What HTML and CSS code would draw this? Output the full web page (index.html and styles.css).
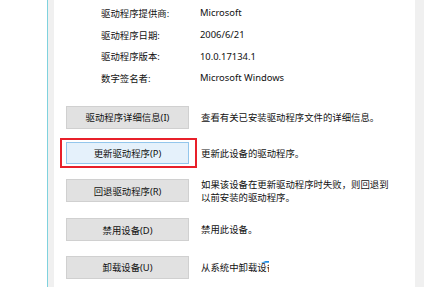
FILE: index.html
```html
<!DOCTYPE html>
<html lang="zh-CN">
<head>
  <meta charset="UTF-8">
  <title>驱动程序</title>
  <link rel="stylesheet" href="styles.css">
</head>
<body>
  <div class="window">
    <div class="panel">
      <!-- driver info -->
      <div class="info">
        <div class="info-row"><span class="label">驱动程序提供商:</span><span>Microsoft</span></div>
        <div class="info-row"><span class="label">驱动程序日期:</span><span>2006/6/21</span></div>
        <div class="info-row"><span class="label">驱动程序版本:</span><span>10.0.17134.1</span></div>
        <div class="info-row"><span class="label">数字签名者:</span><span>Microsoft Windows</span></div>
      </div>

      <!-- actions -->
      <div class="actions">
        <div class="action">
          <button class="btn">驱动程序详细信息(I)</button>
          <div class="desc">查看有关已安装驱动程序文件的详细信息。</div>
        </div>
        <div class="action">
          <button class="btn focused">更新驱动程序(P)</button>
          <div class="desc">更新此设备的驱动程序。</div>
        </div>
        <div class="action tall">
          <button class="btn">回退驱动程序(R)</button>
          <div class="desc">如果该设备在更新驱动程序时失败，则回退到<br>以前安装的驱动程序。</div>
        </div>
        <div class="action tall">
          <button class="btn">禁用设备(D)</button>
          <div class="desc">禁用此设备。</div>
        </div>
        <div class="action">
          <button class="btn">卸载设备(U)</button>
          <div class="desc cut">从系统中卸载设备<span class="mark"></span></div>
        </div>
      </div>
    </div>
  </div>
</body>
</html>
```

FILE: styles.css
```css
body { margin: 0; background: #fff; font-family: "Noto Sans", "Noto Sans CJK SC", sans-serif; font-size: 9.4px; color: #111; }
.window { margin-left: 47px; width: 361px; height: 287px; display: flex; background: #f0f0f0; border-left: 1px solid #7fd2de; border-right: 1px solid #7fd2de; padding: 0 9px 0 6px; box-sizing: content-box; }
.panel { flex: 1; background: #fff; }

.info { padding: 2px 0 0 47px; }
.info-row { display: flex; height: 21.7px; align-items: center; }
.label { width: 99px; }

.actions { display: flex; flex-direction: column; gap: 13px; padding: 17px 0 0 12px; }
.action { display: flex; align-items: center; min-height: 23px; }
.action.tall { min-height: 26px; }
.btn { width: 123px; height: 23px; flex: none; margin-right: 12px; background: #e1e1e1; border: 1px solid #d0d0d0; font: inherit; color: inherit; padding: 0; position: relative; }
.btn.focused { background: #e5f1fb; border-color: #93c6ec; height: 22px; }
.btn.focused::after { content: ""; position: absolute; left: -7px; top: -5px; width: 133px; height: 26px; border: 2px solid #e8202a; }
.desc { line-height: 13px; }
.desc.cut { width: 68px; overflow: hidden; white-space: nowrap; position: relative; }
.mark { position: absolute; right: 0; top: -1px; width: 8px; height: 3px; background: #1e8ce0; clip-path: polygon(100% 0, 100% 100%, 0 100%); }
```
